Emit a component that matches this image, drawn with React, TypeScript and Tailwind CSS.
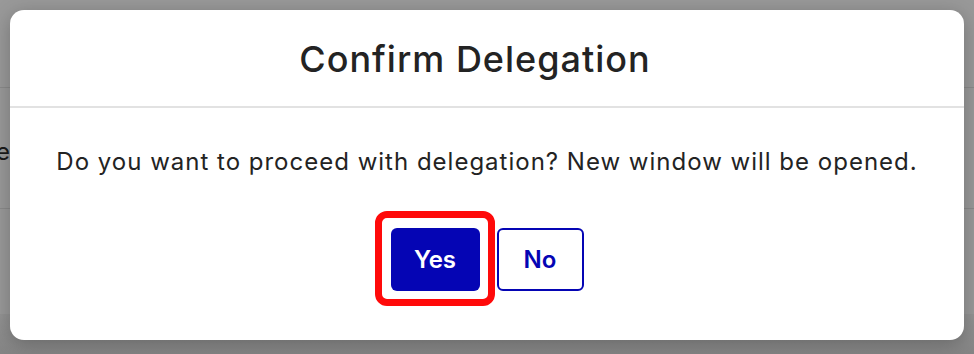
export default function App() {
  return (
    <div className="w-[974px] h-[354px] bg-[#999999] relative overflow-hidden" style={{ fontFamily: 'Inter, "Noto Sans", sans-serif' }}>
      {/* dimmed page behind the dialog */}
      <div className="absolute inset-0">
        <div className="absolute left-0 right-0 top-[87px] h-px bg-[#8a8a8a]" />
        <div className="absolute left-0 right-0 top-[208px] h-px bg-[#8a8a8a]" />
        <div className="absolute left-[-4px] top-[134px] text-[24px] text-[#1a1a1a]">e</div>
        <div className="absolute left-0 right-0 bottom-0 h-[40px] bg-gradient-to-b from-[#939393] to-[#858585]" />
      </div>

      <div className="absolute left-[10px] top-[10px] w-[954px] h-[330px] bg-white rounded-[14px] shadow-[0_4px_20px_rgba(0,0,0,0.25)] flex flex-col">
        <div className="h-[96px] flex items-center justify-center pr-[24px] pt-[2px]">
          <h2 className="text-[36px] font-medium text-[#232323] tracking-[1px]">Confirm Delegation</h2>
        </div>
        <div className="h-[2px] bg-[#e2e2e2]" />
        <div className="flex flex-col items-center pt-[39px]">
          <p className="text-[24px] leading-[30px] text-[#232323] tracking-[1px]">
            Do you want to proceed with delegation? New window will be opened.
          </p>
          <div className="flex gap-[17px] mt-[51px]">
            <div className="relative">
              <button className="w-[89px] h-[63px] rounded-[6px] bg-[#0505b4] text-white text-[24px] font-semibold">Yes</button>
              <div className="absolute left-[-16px] top-[-17px] right-[-15px] bottom-[-15px] border-[7px] border-[#ff0a0a] rounded-[12px] pointer-events-none" />
            </div>
            <button className="w-[87px] h-[63px] rounded-[6px] border-2 border-[#0505b4] bg-white text-[#0505b4] text-[24px] font-semibold">No</button>
          </div>
        </div>
      </div>
    </div>
  );
}
